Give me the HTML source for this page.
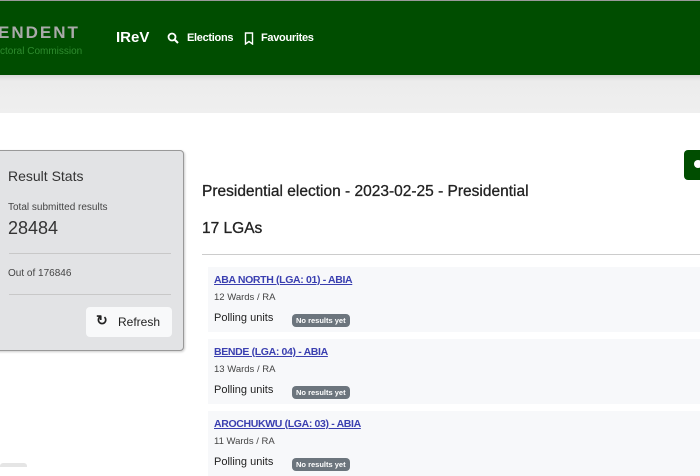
<!DOCTYPE html>
<html><head><style>
*{margin:0;padding:0;box-sizing:border-box}
body{width:700px;height:467px;overflow:hidden;background:#fff;font-family:"Liberation Sans",sans-serif;position:relative}
.nav{position:absolute;left:0;top:0;width:700px;height:75px;background:#004d00;border-top:1px solid #999}
.sub{position:absolute;left:0;top:75px;width:700px;height:38px;background:linear-gradient(#d8d8d8,#ececec 6px,#efefef)}
.abs{position:absolute;white-space:nowrap}
.card{position:absolute;left:-10px;top:150px;width:194px;height:201px;background:#e2e3e5;border:1px solid #999;border-radius:4px;box-shadow:1px 1px 2px rgba(0,0,0,.2)}
.hr{position:absolute;left:8px;width:162px;height:1px;background:#c8c8c8}
.item{position:absolute;left:208px;width:492px;height:65px;background:#f7f8fa}
.item a{position:absolute;left:6px;top:7px;font-size:10.5px;font-weight:bold;color:#3a3fb0;text-decoration:underline;letter-spacing:-.35px}
.item .w{position:absolute;left:6px;top:25px;font-size:9.5px;color:#444}
.item .p{position:absolute;left:6px;top:45px;font-size:11px;color:#222}
.item .b{position:absolute;left:84px;top:47px;font-size:7.5px;font-weight:bold;color:#fff;background:#6c757d;border-radius:4px;padding:2px 4px}
</style></head><body>
<div class="nav">
<div class="abs" style="left:-2px;top:22px;font-size:17px;font-weight:bold;letter-spacing:2px;color:#aaa">ENDENT</div>
<div class="abs" style="left:0;top:45px;font-size:10px;color:#2e8b2e">ctoral Commission</div>
<div class="abs" style="left:116px;top:28px;font-size:15px;font-weight:bold;color:#fff">IReV</div>
<svg class="abs" style="left:167px;top:31px" width="12" height="12" viewBox="0 0 12 12"><circle cx="5" cy="5" r="3.5" stroke="#fff" stroke-width="1.8" fill="none"/><path d="M7.5 7.5L11 11" stroke="#fff" stroke-width="2"/></svg>
<div class="abs" style="left:187px;top:31px;font-size:11px;font-weight:bold;color:#fff;letter-spacing:-.3px">Elections</div>
<svg class="abs" style="left:244px;top:31px" width="10" height="13" viewBox="0 0 10 13"><path d="M1.5 1h7v11L5 9.5 1.5 12z" stroke="#fff" stroke-width="1.4" fill="none"/></svg>
<div class="abs" style="left:261px;top:31px;font-size:11px;font-weight:bold;color:#fff;letter-spacing:-.3px">Favourites</div>
</div>
<div class="sub"></div>
<div class="card">
<div class="abs" style="left:17px;top:17px;font-size:14px;color:#333">Result Stats</div>
<div class="abs" style="left:17px;top:51px;font-size:10px;color:#444">Total submitted results</div>
<div class="abs" style="left:17px;top:67px;font-size:18px;color:#333">28484</div>
<div class="hr" style="left:18px;top:102px"></div>
<div class="abs" style="left:17px;top:117px;font-size:10px;color:#444">Out of 176846</div>
<div class="hr" style="left:18px;top:143px"></div>
<div class="abs" style="left:95px;top:156px;width:86px;height:30px;background:#f8f9fa;border-radius:4px"></div>
<div class="abs" style="left:105px;top:161px;font-size:14px;font-weight:bold;color:#222">&#x21bb;</div>
<div class="abs" style="left:127px;top:164px;font-size:12px;color:#222">Refresh</div>
</div>
<div class="abs" style="left:684px;top:150px;width:20px;height:30px;background:#004d00;border-radius:4px"></div>
<div class="abs" style="left:694px;top:160px;width:8px;height:8px;border-radius:50%;background:#fff"></div>
<div class="abs" style="left:202px;top:183px;font-size:15.5px;color:#222;-webkit-text-stroke:.3px #222">Presidential election - 2023-02-25 - Presidential</div>
<div class="abs" style="left:202px;top:220px;font-size:15.5px;color:#222;-webkit-text-stroke:.3px #222">17 LGAs</div>
<div class="abs" style="left:202px;top:254px;width:498px;height:1px;background:#ccc"></div>
<div class="item" style="top:267px"><a>ABA NORTH (LGA: 01) - ABIA</a><div class="w">12 Wards / RA</div><div class="p">Polling units</div><div class="b">No results yet</div></div>
<div class="item" style="top:339px"><a>BENDE (LGA: 04) - ABIA</a><div class="w">13 Wards / RA</div><div class="p">Polling units</div><div class="b">No results yet</div></div>
<div class="item" style="top:411px"><a>AROCHUKWU (LGA: 03) - ABIA</a><div class="w">11 Wards / RA</div><div class="p">Polling units</div><div class="b">No results yet</div></div>
<div class="abs" style="left:0;top:463px;width:27px;height:4px;background:#e5e5e5;border-radius:3px 3px 0 0"></div>
</body></html>
